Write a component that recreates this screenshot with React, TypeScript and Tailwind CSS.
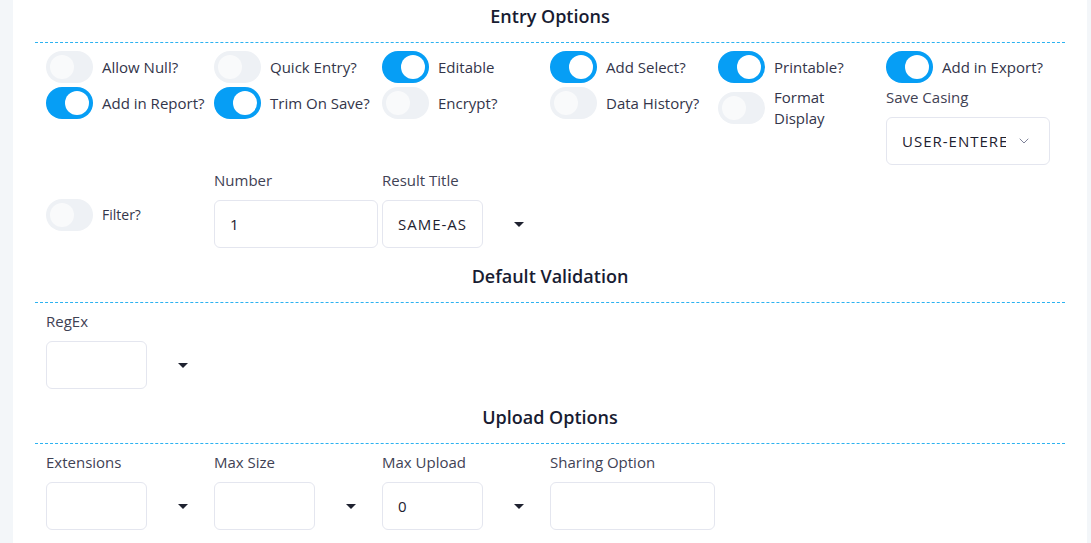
import { ChevronDown } from "lucide-react";

const font = { fontFamily: '"Open Sans", "Liberation Sans", sans-serif' };

function Toggle({ on }: { on?: boolean }) {
  return (
    <span
      className={`flex h-[32px] w-[47px] shrink-0 rounded-full p-[4px] ${
        on ? "justify-end bg-[#069ef5]" : "justify-start bg-[#eef1f5]"
      }`}
    >
      <span className={`h-[24px] w-[24px] rounded-full ${on ? "bg-white" : "bg-[#f9fafb]"}`} />
    </span>
  );
}

function ToggleItem({ label, on }: { label: React.ReactNode; on?: boolean }) {
  return (
    <div className="flex items-center gap-[9px]">
      <Toggle on={on} />
      <span className="text-[15px] leading-[21px] text-[#33354a]">{label}</span>
    </div>
  );
}

function Label({ children }: { children: React.ReactNode }) {
  return <div className="mb-[9px] text-[15px] leading-[21px] text-[#3f4254]">{children}</div>;
}

function Caret() {
  return (
    <div className="flex w-[72px] shrink-0 items-center justify-center">
      <svg width="10" height="5" viewBox="0 0 10 5">
        <path d="M0 0 L10 0 L5 5 Z" fill="#1f2230" />
      </svg>
    </div>
  );
}

function Box({ value, width = "w-[101px]" }: { value?: string; width?: string }) {
  return (
    <div
      className={`${width} flex h-[48px] shrink-0 items-center rounded-[6px] border border-[#e4e6ef] bg-white px-[15px]`}
    >
      <span className="overflow-hidden whitespace-nowrap text-[15px] font-medium tracking-[1px] text-[#1e2130]">
        {value}
      </span>
    </div>
  );
}

function SelectField({ label, value }: { label: string; value?: string }) {
  return (
    <div>
      <Label>{label}</Label>
      <div className="flex">
        <Box value={value} />
        <Caret />
      </div>
    </div>
  );
}

function SectionTitle({ children, first }: { children: React.ReactNode; first?: boolean }) {
  return (
    <div
      className={`${first ? "pt-[5px]" : "mt-[17px]"} border-b border-dashed border-[#2db2f0] pb-[15px] text-center text-[18px] font-semibold leading-[22px] text-[#181c32]`}
    >
      {children}
    </div>
  );
}

export default function App() {
  return (
    <div className="flex min-h-screen bg-[#f3f6f9]" style={font}>
      <div className="w-[13px] shrink-0" />
      <div className="flex-1 bg-white px-[22px] pb-6">
        {/* Entry Options */}
        <SectionTitle first>Entry Options</SectionTitle>
        <div className="px-[11px] pt-2">
          <div className="grid grid-cols-[repeat(6,168px)] items-start gap-y-[4px]">
            <ToggleItem label="Allow Null?" />
            <ToggleItem label="Quick Entry?" />
            <ToggleItem label="Editable" on />
            <ToggleItem label="Add Select?" on />
            <ToggleItem label="Printable?" on />
            <ToggleItem label="Add in Export?" on />

            <ToggleItem label="Add in Report?" on />
            <ToggleItem label="Trim On Save?" on />
            <ToggleItem label="Encrypt?" />
            <ToggleItem label="Data History?" />
            <ToggleItem
              label={
                <>
                  Format
                  <br />
                  Display
                </>
              }
            />
            <div>
              <Label>Save Casing</Label>
              <div className="flex h-[48px] w-[164px] items-center justify-between rounded-[6px] border border-[#e4e6ef] px-[15px]">
                <span className="w-[104px] overflow-hidden whitespace-nowrap text-[15px] font-medium tracking-[1px] text-[#1e2130]">
                  USER-ENTERED
                </span>
                <ChevronDown size={16} strokeWidth={1.5} className="mr-[2px] text-[#7e8299]" />
              </div>
            </div>
          </div>

          <div className="mt-[5px] grid grid-cols-[repeat(6,168px)] items-start">
            <div className="mt-[29px] flex items-center gap-[9px]">
              <Toggle />
              <span className="text-[14px] leading-[20px] text-[#33354a]">Filter?</span>
            </div>
            <div>
              <Label>Number</Label>
              <Box value="1" width="w-[164px]" />
            </div>
            <SelectField label="Result Title" value="SAME-AS-TITLE" />
          </div>
        </div>

        {/* Default Validation */}
        <SectionTitle>Default Validation</SectionTitle>
        <div className="px-[11px] pt-2">
          <SelectField label="RegEx" />
        </div>

        {/* Upload Options */}
        <SectionTitle>Upload Options</SectionTitle>
        <div className="grid grid-cols-[repeat(6,168px)] items-start px-[11px] pt-2">
          <SelectField label="Extensions" />
          <SelectField label="Max Size" />
          <SelectField label="Max Upload" value="0" />
          <div>
            <Label>Sharing Option</Label>
            <Box width="w-[165px]" />
          </div>
        </div>
      </div>
      <div className="w-[7px] shrink-0" />
    </div>
  );
}
